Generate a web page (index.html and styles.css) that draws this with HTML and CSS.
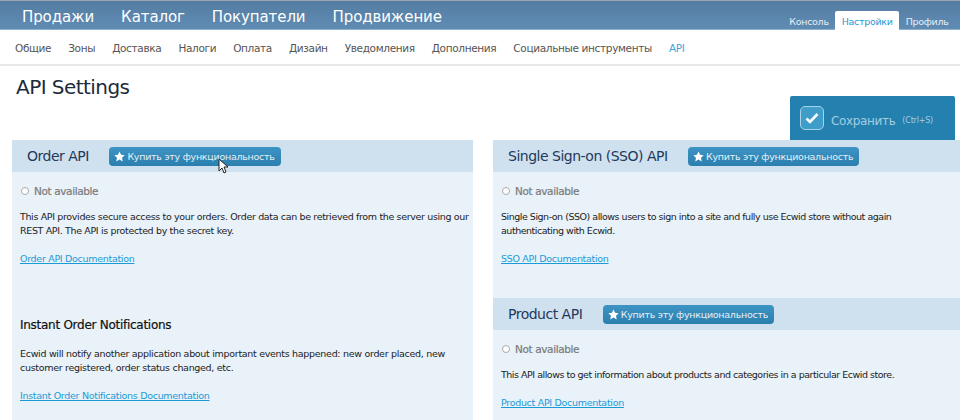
FILE: index.html
```html
<!DOCTYPE html>
<html lang="ru">
<head>
<meta charset="utf-8">
<title>API Settings</title>
<link rel="stylesheet" href="styles.css">
</head>
<body>
<header class="topbar">
  <nav class="mainnav">
    <a>Продажи</a><a>Каталог</a><a>Покупатели</a><a>Продвижение</a>
  </nav>
  <nav class="sidenav">
    <a>Консоль</a><a class="on">Настройки</a><a>Профиль</a>
  </nav>
</header>
<nav class="subnav">
  <a>Общие</a><a>Зоны</a><a>Доставка</a><a>Налоги</a><a>Оплата</a><a>Дизайн</a><a>Уведомления</a><a>Дополнения</a><a>Социальные инструменты</a><a class="on">API</a>
</nav>
<h1 class="title">API Settings</h1>
<div class="save">
  <span class="savecheck"><svg width="14" height="12" viewBox="0 0 14 12"><path d="M1.500 6.500 5 10 12.500 2" fill="none" stroke="#fff" stroke-width="2.600"/></svg></span>
  <span class="savetext">Сохранить</span><span class="savekey">(Ctrl+S)</span>
</div>
<main class="columns">
  <section class="col colleft">
    <div class="head">
      <h2>Order API</h2>
      <a class="buy"><svg class="star" width="11" height="11" viewBox="0 0 24 24"><path d="M12 1l3.400 7.300 7.900 1-5.800 5.500 1.500 7.900-7-3.900-7 3.900 1.500-7.900L.7 9.300l7.900-1z" fill="#fff"/></svg>Купить эту функциональность</a>
    </div>
    <div class="body">
      <p class="status"><i class="dot"></i>Not available</p>
      <p class="text">This API provides secure access to your orders. Order data can be retrieved from the server using our REST API. The API is protected by the secret key.</p>
      <a class="doc">Order API Documentation</a>
      <h3>Instant Order Notifications</h3>
      <p class="text notes">Ecwid will notify another application about important events happened: new order placed, new customer registered, order status changed, etc.</p>
      <a class="doc">Instant Order Notifications Documentation</a>
    </div>
  </section>
  <section class="col colright">
    <div class="head">
      <h2>Single Sign-on (SSO) API</h2>
      <a class="buy"><svg class="star" width="11" height="11" viewBox="0 0 24 24"><path d="M12 1l3.400 7.300 7.900 1-5.800 5.500 1.500 7.900-7-3.900-7 3.900 1.500-7.900L.7 9.300l7.900-1z" fill="#fff"/></svg>Купить эту функциональность</a>
    </div>
    <div class="body sso">
      <p class="status"><i class="dot"></i>Not available</p>
      <p class="text tight">Single Sign-on (SSO) allows users to sign into a site and fully use Ecwid store without again authenticating with Ecwid.</p>
      <a class="doc">SSO API Documentation</a>
    </div>
    <div class="head">
      <h2>Product API</h2>
      <a class="buy"><svg class="star" width="11" height="11" viewBox="0 0 24 24"><path d="M12 1l3.400 7.300 7.900 1-5.800 5.500 1.500 7.900-7-3.900-7 3.900 1.500-7.900L.7 9.300l7.900-1z" fill="#fff"/></svg>Купить эту функциональность</a>
    </div>
    <div class="body">
      <p class="status"><i class="dot"></i>Not available</p>
      <p class="text tight">This API allows to get information about products and categories in a particular Ecwid store.</p>
      <a class="doc">Product API Documentation</a>
    </div>
  </section>
</main>
<svg class="cursor" width="12" height="16" viewBox="0 0 12 16"><path d="M1 1v12l3-3 2 5 2-1-2-5h4z" fill="#fff" stroke="#222" stroke-width="1"/></svg>
</body>
</html>
```
FILE: styles.css
```css
* { box-sizing: border-box; }
html, body { margin: 0; padding: 0; }
body {
  width: 960px;
  height: 420px;
  overflow: hidden;
  position: relative;
  background: #fff;
  font-family: "DejaVu Sans", sans-serif;
  color: #1a1a1a;
}
.topbar {
  height: 30px;
  display: flex;
  justify-content: space-between;
  align-items: flex-end;
  background: linear-gradient(#557ca3, #5f8cb3);
  border-top: 1px solid #9aa5b2;
  border-bottom: 1px solid #8fb0cc;
  padding: 0 5px 0 22px;
}
.mainnav { display: flex; gap: 27px; align-self: center; margin-top: 3px; }
.mainnav a { color: #fff; font-size: 15px; letter-spacing: -.1px; }
.sidenav { display: flex; align-items: flex-end; margin-bottom: -1px; }
.sidenav a { color: #e6eef5; font-size: 9.500px; padding: 0 6.500px; height: 19px; line-height: 21px; letter-spacing: -.3px; }
.sidenav a.on { background: #fff; color: #1c9ad6; border-radius: 2px 2px 0 0; }
.subnav {
  height: 36px;
  display: flex;
  align-items: center;
  gap: 17px;
  padding: 1px 15px 0;
  border-bottom: 2px solid #e8e8e8;
}
.subnav a { font-size: 10.500px; color: #555; letter-spacing: -.34px; }
.subnav a.on { color: #3aa8dc; }
.title {
  margin: 0;
  padding: 9px 16px 0;
  height: 74px;
  font-size: 20px;
  font-weight: 400;
  color: #1d2b3a;
  line-height: 24px;
  letter-spacing: -.55px;
}
.save {
  position: absolute;
  left: 790px;
  top: 96px;
  width: 165px;
  height: 44px;
  background: #2480ae;
  border-radius: 2px 2px 0 0;
  display: flex;
  align-items: center;
  padding-left: 10px;
  color: #a3cde2;
}
.savecheck {
  width: 24px; height: 24px;
  border: 1px solid #a9d2e6;
  border-radius: 5px;
  background: #3f9dca;
  display: flex; align-items: center; justify-content: center;
  margin-right: 7px;
}
.savetext { font-size: 12px; letter-spacing: -.35px; margin: 6px 7px 0 0; }
.savekey { font-size: 8px; letter-spacing: -.2px; margin-top: 5px; }
.columns {
  display: grid;
  grid-template-columns: 461px 467px;
  column-gap: 20px;
  padding-left: 12px;
  width: 960px;
}
.col { background: #e9f1f9; height: 280px; }
.colright { width: 467px; }
.head {
  height: 32px;
  background: #cfe0ee;
  display: flex;
  align-items: center;
  padding-left: 15px;
}
.head h2 { margin: 0 20.500px 0 0; font-size: 14px; font-weight: 400; color: #1e3a5c; letter-spacing: -.5px; }
.buy {
  display: flex;
  align-items: center;
  height: 19px;
  padding: 0 6px 0 5px;
  background: linear-gradient(#3d94c4, #2b7fae);
  border-radius: 4px;
  color: #e4f1f8;
  font-size: 9.500px;
  letter-spacing: -.27px;
}
.star { margin-right: 2px; }
.body { padding: 13px 0 0 8px; }
.body.sso { height: 126px; }
.status { margin: 0 0 13px; font-size: 10.500px; font-weight: 400; color: #7a7a7a; -webkit-text-stroke: .2px #7a7a7a; letter-spacing: -.38px; display: flex; align-items: center; height: 12px; }
.dot { width: 8px; height: 8px; border: 1px solid #aaa; border-radius: 50%; background: #fff; margin: 0 5px 0 1px; }
.text { margin: 0 0 9px; font-size: 9.500px; line-height: 14px; color: #222; letter-spacing: -.35px; }
.text.tight { letter-spacing: -.48px; max-width: 440px; }
.text.notes { letter-spacing: -.3px; }
.doc { font-size: 9.500px; color: #1a9bd7; text-decoration: underline; letter-spacing: -.3px; }
h3 { margin: 52px 0 15px; font-size: 12px; font-weight: 400; color: #111; -webkit-text-stroke: .2px #111; letter-spacing: -.27px; }
.cursor { position: absolute; left: 218px; top: 158px; }
```
